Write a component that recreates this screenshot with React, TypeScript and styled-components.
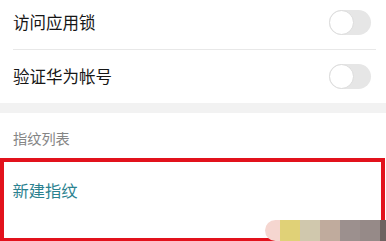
import React from "react";
import styled, { createGlobalStyle } from "styled-components";

const Global = createGlobalStyle`
  html, body { margin: 0; padding: 0; background: #ffffff; }
  body { font-family: "Noto Sans CJK SC", "Noto Sans", sans-serif; }
`;

const Page = styled.div`
  position: relative;
  width: 386px;
  height: 241px;
  overflow: hidden;
  background: #ffffff;
  display: flex;
  flex-direction: column;
`;

const Row = styled.div<{ $h: number; $pb?: number }>`
  height: ${(p) => p.$h}px;
  padding: 0 15px ${(p) => p.$pb ?? 0}px 13px;
  box-sizing: border-box;
  display: flex;
  align-items: center;
  justify-content: space-between;
  flex-shrink: 0;
`;

const Label = styled.span`
  font-size: 16.5px;
  color: #161616;
  line-height: 1;
`;

const Divider = styled.div`
  height: 1px;
  margin: 0 10px 0 13px;
  background: #e8e8e8;
  flex-shrink: 0;
`;

const Track = styled.div`
  width: 42px;
  height: 25px;
  border-radius: 13px;
  background: #e6e6e6;
  display: flex;
  align-items: center;
  flex-shrink: 0;
`;

const Knob = styled.div`
  width: 23px;
  height: 23px;
  border-radius: 50%;
  background: #ffffff;
  border: 1px solid #dcdcdc;
`;

const Band = styled.div`
  height: 10px;
  background: #f2f2f2;
  flex-shrink: 0;
`;

const SectionHeader = styled.div`
  height: 45px;
  padding: 4px 13px 0;
  display: flex;
  align-items: center;
  box-sizing: border-box;
  font-size: 14.2px;
  color: #858585;
  flex-shrink: 0;
`;

const Highlight = styled.div`
  flex: 1;
  margin-right: 1px;
  border: 4.5px solid #e2121c;
  border-bottom-width: 3px;
  padding: 0 9px 20px 8.5px;
  display: flex;
  align-items: center;
`;

const Action = styled.span`
  font-size: 16.3px;
  color: #2b8290;
  line-height: 1;
`;

const Mosaic = styled.div`
  position: absolute;
  left: 265px;
  top: 220px;
  display: flex;
  height: 21px;
`;

const Tile = styled.div<{ $c: string; $w: number; $round?: boolean }>`
  width: ${(p) => p.$w}px;
  height: 100%;
  background: ${(p) => p.$c};
  border-radius: ${(p) => (p.$round ? "12px 0 0 12px" : "0")};
`;

const Toggle = () => (
  <Track>
    <Knob />
  </Track>
);

const tiles = [
  { c: "#f5d6d0", w: 15, round: true },
  { c: "#e0d177", w: 20 },
  { c: "#d0c8ad", w: 20 },
  { c: "#c0ab9d", w: 20 },
  { c: "#9c908e", w: 20 },
  { c: "#968a88", w: 20 },
  { c: "#6e6361", w: 6 },
];

export default function App() {
  return (
    <>
      <Global />
      <Page>
        <Row $h={49} $pb={4}>
          <Label>访问应用锁</Label>
          <Toggle />
        </Row>
        <Divider />
        <Row $h={53}>
          <Label>验证华为帐号</Label>
          <Toggle />
        </Row>
        <Band />
        <SectionHeader>指纹列表</SectionHeader>
        <Highlight>
          <Action>新建指纹</Action>
        </Highlight>
        <Mosaic>
          {tiles.map((t, i) => (
            <Tile key={i} $c={t.c} $w={t.w} $round={t.round} />
          ))}
        </Mosaic>
      </Page>
    </>
  );
}
